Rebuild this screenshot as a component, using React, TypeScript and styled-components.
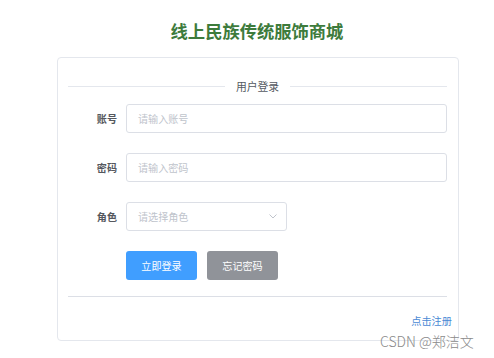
import React from "react";
import styled, { createGlobalStyle } from "styled-components";

const Global = createGlobalStyle`
  html, body { margin: 0; padding: 0; background: #ffffff; }
  body { font-family: "Noto Sans CJK SC", "Noto Sans", sans-serif; }
  * { box-sizing: border-box; }
`;

const Page = styled.div`
  position: relative;
  width: 494px;
  height: 358px;
  padding-top: 19px;
  overflow: hidden;
`;

const Title = styled.h1`
  margin: 0;
  text-align: center;
  font-size: 17.3px;
  line-height: 24px;
  font-weight: 700;
  color: #3d7b3c;
  padding-left: 20px;
`;

const Card = styled.div`
  margin: 14px 0 0 57px;
  width: 402px;
  border: 1px solid #e4e7ed;
  border-radius: 4px;
  padding: 20px 11px 12px 10px;
`;

const HeaderDivider = styled.div`
  display: flex;
  align-items: center;
  height: 16px;
  gap: 11px;
  font-size: 10.8px;
  color: #555a62;
  &::before, &::after {
    content: "";
    flex: 1;
    height: 1px;
    background: #e4e7ed;
  }
`;

const Form = styled.div`
  display: flex;
  flex-direction: column;
  gap: 20px;
  margin-top: 10px;
`;

const Row = styled.div`
  display: flex;
  align-items: center;
  height: 29px;
`;

const Label = styled.label`
  width: 58px;
  padding-right: 9px;
  text-align: right;
  font-size: 10.1px;
  font-weight: 700;
  color: #55585e;
`;

const Field = styled.div<{ $width: number }>`
  position: relative;
  width: ${(p) => p.$width}px;
  height: 29px;
  border: 1px solid #dcdfe6;
  border-radius: 3px;
  display: flex;
  align-items: center;
  padding: 0 11px;
  font-size: 10.1px;
  color: #c0c4cc;
`;

const Chevron = styled.svg`
  position: absolute;
  right: 9px;
  top: 11px;
`;

const ButtonRow = styled(Row)`
  padding-left: 58px;
  gap: 10px;
`;

const Button = styled.button<{ $variant: "primary" | "info" }>`
  width: 71px;
  height: 29px;
  border: none;
  border-radius: 3px;
  font-family: inherit;
  font-size: 10.1px;
  color: #ffffff;
  background: ${(p) => (p.$variant === "primary" ? "#409eff" : "#909399")};
  padding: 0;
`;

const Rule = styled.div`
  height: 1px;
  background: #dcdfe6;
  margin-top: 16px;
`;

const Footer = styled.div`
  display: flex;
  justify-content: flex-end;
  margin-top: 17px;
  margin-right: -5px;
  height: 14px;
`;

const Link = styled.a`
  font-size: 10.2px;
  line-height: 14px;
  color: #4a89d4;
  text-decoration: none;
`;

const Watermark = styled.div`
  position: absolute;
  left: 380px;
  top: 332px;
  font-size: 14px;
  line-height: 18px;
  font-weight: 300;
  color: #8a8a8a;
  white-space: nowrap;
  font-family: "Noto Sans CJK SC", "Liberation Sans", sans-serif;
`;

export default function App() {
  return (
    <>
      <Global />
      <Page>
        <Title>线上民族传统服饰商城</Title>
        <Card>
          <HeaderDivider>用户登录</HeaderDivider>
          <Form>
            <Row>
              <Label>账号</Label>
              <Field $width={321}>请输入账号</Field>
            </Row>
            <Row>
              <Label>密码</Label>
              <Field $width={321}>请输入密码</Field>
            </Row>
            <Row>
              <Label>角色</Label>
              <Field $width={161}>
                请选择角色
                <Chevron width="8" height="5" viewBox="0 0 8 5">
                  <path d="M0.5 0.5 L4 4 L7.5 0.5" fill="none" stroke="#c0c4cc" strokeWidth="1" />
                </Chevron>
              </Field>
            </Row>
            <ButtonRow>
              <Button $variant="primary">立即登录</Button>
              <Button $variant="info">忘记密码</Button>
            </ButtonRow>
          </Form>
          <Rule />
          <Footer>
            <Link>点击注册</Link>
          </Footer>
        </Card>
        <Watermark>CSDN @郑洁文</Watermark>
      </Page>
    </>
  );
}
